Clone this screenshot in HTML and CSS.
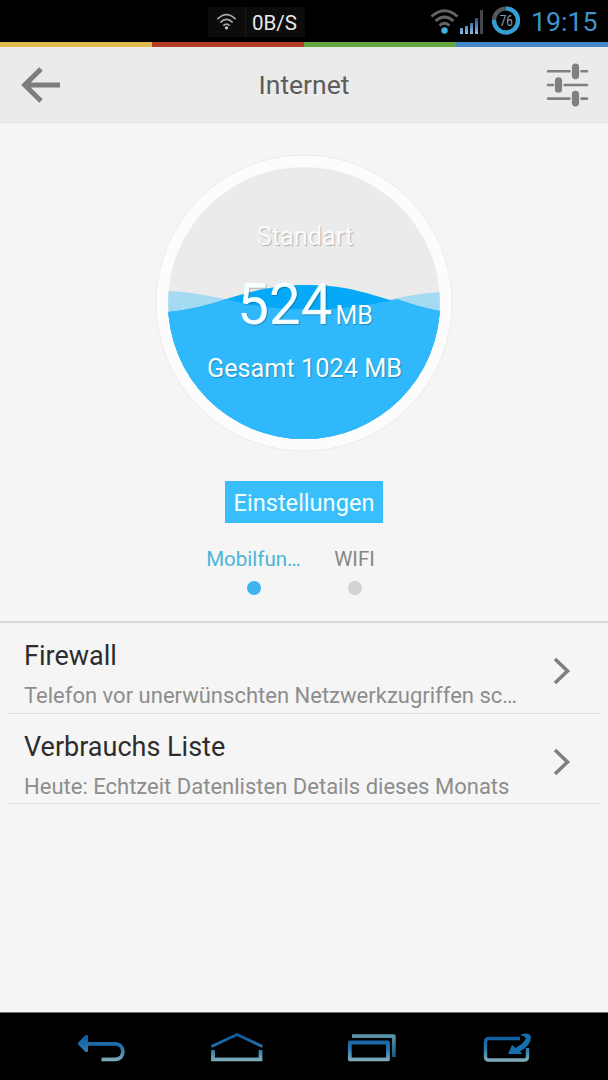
FILE: index.html
```html
<!DOCTYPE html>
<html lang="de">
<head>
<meta charset="utf-8">
<title>Internet</title>
<link rel="stylesheet" href="styles.css">
</head>
<body>
<div class="statusbar">
  <div class="speed">
    <svg class="speed-icon" width="38" height="30" viewBox="0 0 38 30" fill="none" stroke="#a9a9a9" stroke-width="1.8">
      <path d="M9.700 12Q19 3 28.300 12M12.700 15.500Q19 9 25.300 15.500M15.700 18.800Q19 15.500 22.300 18.800"/>
      <circle cx="19" cy="21" r="1.700" fill="#ccc" stroke="none"/>
    </svg>
    <span class="speed-text">0B/S</span>
  </div>
  <svg class="wifi" width="30" height="28" viewBox="0 0 30 28" fill="none" stroke="#626466" stroke-width="2.800">
    <path d="M1.500 8.500Q14.500-3 27.500 8.500M5.500 13Q14.500 5 23.500 13M9.500 17.500Q14.500 13 19.500 17.500"/>
    <circle cx="14.500" cy="22.500" r="3.200" fill="#45b0df" stroke="none"/>
  </svg>
  <svg class="signal" width="24" height="28" viewBox="0 0 24 28">
    <defs><linearGradient id="bars" x1="0" y1="0" x2="0" y2="1"><stop stop-color="#174f94"/><stop offset="1" stop-color="#91bde0"/></linearGradient></defs>
    <path fill="url(#bars)" d="M0 20h3v6h-3zM5 18h3v8h-3zM10 15h3v11h-3zM15 10h3v16h-3z"/>
    <path fill="#43484e" d="M20 2h3v24h-3z"/>
  </svg>
  <svg class="battery" width="30" height="30" viewBox="0 0 30 30" fill="none" stroke-width="4.200">
    <circle cx="15" cy="14.500" r="12" stroke="#56595c"/>
    <circle cx="15" cy="14.500" r="12" stroke="#32a0d5" pathLength="100" stroke-dasharray="76 24" transform="rotate(-90 15 14.500)"/>
    <text class="battery-text" x="15.200" y="19.500" text-anchor="middle" textLength="13" lengthAdjust="spacingAndGlyphs">76</text>
  </svg>
  <span class="clock">19:15</span>
</div>
<div class="stripe"><i class="yellow"></i><i class="red"></i><i class="green"></i><i class="blue"></i></div>
<header class="header">
  <svg class="back" width="42" height="38" viewBox="0 0 42 38" fill="none" stroke="#7d7d7d" stroke-width="5">
    <path d="M21 3L4.700 19L21 35M4.700 19H40"/>
  </svg>
  <h1 class="title">Internet</h1>
  <svg class="sliders" width="44" height="46" viewBox="0 0 44 46" fill="none" stroke="#808080" stroke-width="2.600" stroke-linecap="round">
    <path d="M2 9.300H23.500M35.500 9.300H41M2 23H7M18.500 23H41M2 36.600H23.500M35.500 36.600H41"/>
    <path d="M29.500 5.200V13.600M12.500 18.800V27.200M29.500 32.400V40.800" stroke-width="7.200"/>
  </svg>
</header>
<main class="main">
  <section class="usage">
    <div class="gauge">
      <svg class="dial" width="298" height="298" viewBox="155 154 298 298">
        <defs><clipPath id="disc"><circle cx="304" cy="303" r="136"/></clipPath></defs>
        <circle cx="304" cy="303" r="148" fill="#fcfcfc" stroke="#ebebeb"/>
        <g clip-path="url(#disc)">
          <path fill="#ebebeb" d="M168 167h272v272H168z"/>
          <path fill="#a5dbf2" d="M168 291C218 293 246 309 307 309.500C365 309 395 295 440 292V440H168z"/>
          <path fill="#05a9f8" d="M168 312C225 306 245 285 307 285C365 285 385 304 440 311V440H168z"/>
          <path fill="#2fb8fb" d="M168 312C196 309 212 304 226 299C251 306 275 309.500 307 309.500C340 309.500 368 306 397 299C411 304 425 308 440 311V440H168z"/>
        </g>
      </svg>
      <div class="labels">
        <div class="plan">Standart</div>
        <div class="amount"><span class="value">524</span><span class="unit">MB</span></div>
        <div class="total">Gesamt 1024 MB</div>
      </div>
    </div>
    <button class="settings">Einstellungen</button>
    <div class="tabs">
      <div class="tab active">Mobilfun…<i class="dot"></i></div>
      <div class="tab">WIFI<i class="dot"></i></div>
    </div>
  </section>
  <section class="list">
    <div class="row">
      <div class="row-text"><div class="name">Firewall</div><div class="desc">Telefon vor unerwünschten Netzwerkzugriffen sc…</div></div>
      <svg class="chevron" width="18" height="28" viewBox="0 0 18 28" fill="none" stroke="#808080" stroke-width="3.600"><path d="M2 2L14.500 14L2 26"/></svg>
    </div>
    <div class="row">
      <div class="row-text"><div class="name">Verbrauchs Liste</div><div class="desc">Heute: Echtzeit Datenlisten Details dieses Monats</div></div>
      <svg class="chevron" width="18" height="28" viewBox="0 0 18 28" fill="none" stroke="#808080" stroke-width="3.600"><path d="M2 2L14.500 14L2 26"/></svg>
    </div>
  </section>
</main>
<nav class="navbar">
  <svg width="56" height="36" viewBox="74 1030 56 36" fill="none" stroke="url(#nav)" stroke-width="3.800">
    <defs>
      <linearGradient id="nav" gradientUnits="userSpaceOnUse" x1="0" y1="1035" x2="0" y2="1061"><stop stop-color="#0e58a0"/><stop offset=".55" stop-color="#2878ad"/><stop offset="1" stop-color="#82aeb8"/></linearGradient>
      <linearGradient id="navtop" gradientUnits="userSpaceOnUse" x1="0" y1="1034" x2="0" y2="1058"><stop stop-color="#6098ab"/><stop offset="1" stop-color="#105583"/></linearGradient>
    </defs>
    <path d="M84 1043.800H115C125.500 1043.800 125.500 1059.300 115 1059.300H101.500"/>
    <path d="M79.500 1043.500L86.500 1036.500V1050.500z" fill="url(#nav)" stroke-width="3.200" stroke-linejoin="round"/>
  </svg>
  <svg width="56" height="36" viewBox="208.500 1030 56 36" fill="none" stroke="url(#nav)" stroke-width="3">
    <path d="M211 1046.500L236.500 1034.500L262 1046.500" stroke-linejoin="round"/>
    <path d="M212.500 1050V1059.300H260V1050" stroke-width="3.800"/>
  </svg>
  <svg width="56" height="36" viewBox="345 1030 56 36" fill="none" stroke="url(#nav)" stroke-width="3.800">
    <path d="M352 1036.200H393.800V1057" stroke="url(#navtop)" stroke-linejoin="round"/>
    <path d="M349.800 1042.500H388V1059.300H349.800z" stroke-linejoin="round"/>
  </svg>
  <svg width="56" height="36" viewBox="480 1030 56 36" fill="none" stroke="url(#nav)" stroke-width="3.400">
    <path d="M520 1038.500H489Q485.500 1038.500 485.500 1042V1057Q485.500 1060 489 1060H524Q527.500 1060 527.500 1057V1048"/>
    <path d="M508 1054L512 1045L515.500 1048Q525 1042.500 526 1038Q523 1034.500 519 1035.500Q529 1031 531 1037Q531 1045 520 1051.500L522.500 1054z" fill="#176eab" stroke="none"/>
  </svg>
</nav>
</body>
</html>
```

FILE: styles.css
```css
* { box-sizing: border-box; }
body { margin: 0; width: 608px; height: 1080px; display: flex; flex-direction: column; background: #f5f5f5; font-family: Roboto, sans-serif; overflow: hidden; }
svg { display: block; flex: none; }
.statusbar { height: 42px; flex: none; display: flex; background: #000; padding-left: 208px; }
.speed { display: flex; align-items: center; width: 97px; height: 30px; margin-top: 7px; background: #0c0c0c; color: #e8e8e8; font-size: 20.5px; }
.speed-icon { border-right: 1px solid #191919; }
.speed-text { padding: 2px 0 0 6px; white-space: nowrap; }
.wifi { margin: 8px 0 0 125px; }
.signal { margin: 8px 0 0 0; }
.battery { margin: 6px 0 0 7px; }
.battery-text { font-size: 15px; fill: #8ba2b4; stroke: none; }
.clock { margin: 5px 0 0 10px; color: #3f94cc; font-size: 26.7px; line-height: 34px; white-space: nowrap; }
.stripe { height: 5px; flex: none; display: grid; grid-template-columns: repeat(4, 1fr); }
.yellow { background: #dfbb4c; }
.red { background: #b43d22; }
.green { background: #61a63c; }
.blue { background: #4388c8; }
.header { height: 76px; flex: none; display: flex; align-items: center; justify-content: space-between; background: #ebebeb; border-bottom: 1px solid #e0e0e0; padding: 1px 18px 0 20px; }
.title { margin: 0; padding-bottom: 2px; color: #5c5c5c; font-size: 26.5px; font-weight: 400; }
.main { flex: 1; }
.usage { height: 500px; display: flex; flex-direction: column; align-items: center; padding-top: 31px; border-bottom: 2px solid #d7d7d7; }
.gauge { display: grid; width: 298px; height: 298px; }
.dial, .labels { grid-area: 1 / 1; }
.labels { z-index: 1; display: flex; flex-direction: column; align-items: center; padding-top: 68px; color: #f5ffff; font-size: 25.3px; line-height: 30px; text-shadow: 1px 1px 1px rgba(0, 0, 0, .25); white-space: nowrap; }
.plan { color: #fbfbfb; padding-left: 2px; }
.amount { display: flex; align-items: baseline; margin-top: 20px; padding-left: 2px; line-height: 66px; }
.value { font-size: 56.5px; }
.unit { font-size: 25px; padding-left: 3px; }
.total { margin-top: 5px; padding-left: 1px; }
.settings { margin-top: 29px; width: 158px; height: 42px; padding: 2px 0 0; border: 0; background: #3abdfb; color: #f1ffff; font: 23.6px Roboto, sans-serif; }
.tabs { display: flex; margin-top: 23px; }
.tab { width: 101px; display: flex; flex-direction: column; align-items: center; gap: 9px; color: #878787; font-size: 20.5px; line-height: 26px; white-space: nowrap; }
.dot { width: 14px; height: 14px; border-radius: 50%; background: #d2d2d2; }
.active { color: #4cb5d8; }
.active .dot { background: #3db5ee; }
.list { padding: 0 7px; }
.row { height: 90.5px; display: flex; justify-content: space-between; border-bottom: 1px solid #dedede; padding: 15px 30px 0 17px; }
.name { color: #2d2d2d; font-size: 27px; line-height: 36px; }
.desc { margin-top: 7px; color: #8d8d8d; font-size: 22.03px; line-height: 30px; white-space: nowrap; }
.chevron { margin-top: 19px; }
.navbar { height: 68px; flex: none; display: flex; justify-content: space-between; background: #000; border-top: 1px solid #777; padding: 17px 72px 0 74px; }
```
